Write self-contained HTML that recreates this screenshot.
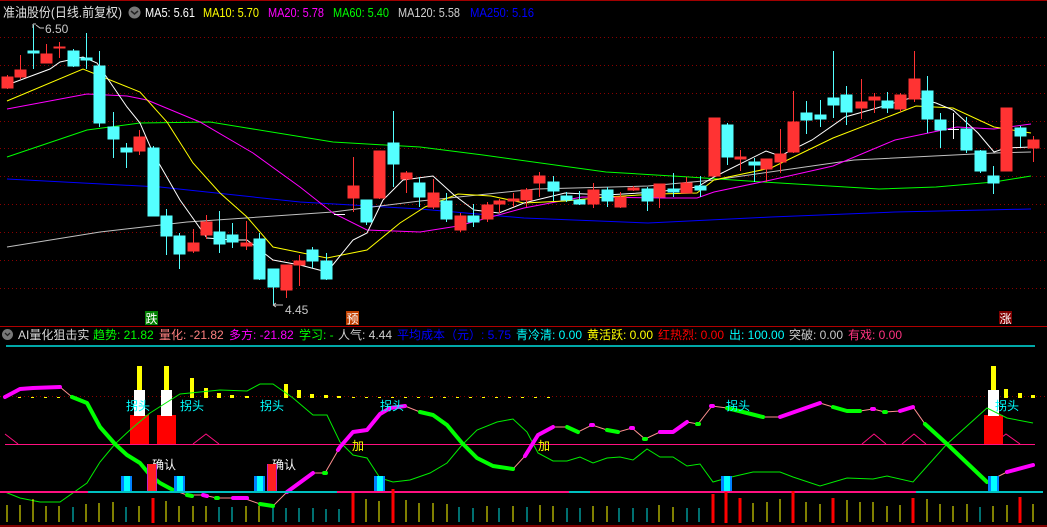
<!DOCTYPE html>
<html><head><meta charset="utf-8"><style>
html,body{margin:0;padding:0;background:#000;width:1047px;height:527px;overflow:hidden}
svg{display:block}
text{font-family:"Liberation Sans","Noto Sans CJK SC",sans-serif}
</style></head><body>
<svg width="1047" height="527" viewBox="0 0 1047 527" xmlns="http://www.w3.org/2000/svg">
<rect width="1047" height="527" fill="#000"/>
<line x1="0" y1="0.5" x2="1047" y2="0.5" stroke="#a00000"/>
<g stroke="#8a0000" stroke-dasharray="1,3">
<line x1="0" y1="37.5" x2="1047" y2="37.5"/><line x1="0" y1="65.5" x2="1047" y2="65.5"/><line x1="0" y1="93.5" x2="1047" y2="93.5"/><line x1="0" y1="121.5" x2="1047" y2="121.5"/><line x1="0" y1="148.5" x2="1047" y2="148.5"/><line x1="0" y1="176.5" x2="1047" y2="176.5"/><line x1="0" y1="204.5" x2="1047" y2="204.5"/><line x1="0" y1="232.5" x2="1047" y2="232.5"/><line x1="0" y1="260.5" x2="1047" y2="260.5"/><line x1="0" y1="288.5" x2="1047" y2="288.5"/>
<line x1="0" y1="396.5" x2="1047" y2="396.5"/>
</g>
<g font-size="13">
<text x="3" y="17" fill="#e0e0e0" textLength="119" lengthAdjust="spacingAndGlyphs">准油股份(日线.前复权)</text>
<circle cx="134.5" cy="12.5" r="6" fill="#777"/><path d="M131 11l3.5 3 3.5-3" stroke="#222" stroke-width="1.5" fill="none"/>
<text x="145" y="17" fill="#fff" textLength="50" lengthAdjust="spacingAndGlyphs">MA5: 5.61</text>
<text x="203" y="17" fill="#ffff00" textLength="56" lengthAdjust="spacingAndGlyphs">MA10: 5.70</text>
<text x="268" y="17" fill="#ff00ff" textLength="56" lengthAdjust="spacingAndGlyphs">MA20: 5.78</text>
<text x="333" y="17" fill="#00ff00" textLength="56" lengthAdjust="spacingAndGlyphs">MA60: 5.40</text>
<text x="398" y="17" fill="#d0d0d0" textLength="62" lengthAdjust="spacingAndGlyphs">MA120: 5.58</text>
<text x="470" y="17" fill="#0000ff" textLength="64" lengthAdjust="spacingAndGlyphs">MA250: 5.16</text>
</g>
<g fill="none" stroke-width="1">
<polyline stroke="#0000ff" points="7,179 160,187 300,202 420,209 524,218 648,223 771,217 895,212 1031,209"/>
<polyline stroke="#c0c0c0" points="7,247 100,232 187,222 333,212 420,201 536,189 648,186 714,180 854,160 994,153 1031,152"/>
<polyline stroke="#00ff00" points="7,157 87,130 140,123 210,122 333,142 420,147 483,155 606,172 689,177 763,182 879,189 936,187 994,182 1031,176"/>
<polyline stroke="#ff00ff" points="7,109 87,94 127,96 147,100 200,122 253,153 300,187 333,213 367,230 420,232 458,226 524,208 582,197 664,198 697,198 714,192 771,180 833,166 895,140 957,127 994,129 1031,124"/>
<polyline stroke="#ffff00" points="7,101 83,69 140,92 167,122 193,163 220,193 247,217 273,247 327,258 367,250 400,223 425,207 458,194 491,196 524,203 565,201 606,197 656,194 697,193 714,180 771,168 833,138 916,106 953,108 994,127 1031,133"/>
<polyline stroke="#ffffff" points="7,85 50,69 60,62 83,57 97,63 127,107 140,123 153,153 180,200 207,238 233,240 247,240 273,260 300,265 327,272 353,240 367,233 383,200 403,180 433,176 454,195 474,210 499,213 524,203 565,193 606,195 656,192 697,187 714,177 766,151 780,156 812,140 845,117 870,110 914,97 936,103 953,110 978,133 994,152 1006,148 1031,147"/>
</g>
<g shape-rendering="crispEdges">
<g stroke="#ff3333" fill="#ff3333">
<line x1="7.5" y1="75" x2="7.5" y2="89"/><rect x="2" y="77" width="11" height="11"/>
<line x1="20.5" y1="55" x2="20.5" y2="79"/><rect x="15" y="70" width="11" height="7"/>
<line x1="46.5" y1="44" x2="46.5" y2="63"/><rect x="41" y="54" width="11" height="9"/>
<line x1="59.5" y1="42" x2="59.5" y2="58"/><rect x="54" y="47" width="11" height="1"/>
<line x1="139.5" y1="130" x2="139.5" y2="155"/><rect x="134" y="137" width="11" height="14"/>
<line x1="193.5" y1="229" x2="193.5" y2="253"/><rect x="188" y="243" width="11" height="8"/>
<line x1="206.5" y1="215" x2="206.5" y2="239"/><rect x="201" y="222" width="11" height="13"/>
<line x1="246.5" y1="221" x2="246.5" y2="250"/><rect x="241" y="243" width="11" height="3"/>
<line x1="286.5" y1="265" x2="286.5" y2="298"/><rect x="281" y="265" width="11" height="25"/>
<line x1="299.5" y1="255" x2="299.5" y2="286"/><rect x="294" y="261" width="11" height="4"/>
<line x1="353.5" y1="157" x2="353.5" y2="212"/><rect x="348" y="186" width="11" height="12"/>
<line x1="379.5" y1="151" x2="379.5" y2="199"/><rect x="374" y="151" width="11" height="47"/>
<line x1="406.5" y1="171" x2="406.5" y2="193"/><rect x="401" y="173" width="11" height="6"/>
<line x1="433.5" y1="179" x2="433.5" y2="209"/><rect x="428" y="193" width="11" height="14"/>
<line x1="460.5" y1="213" x2="460.5" y2="232"/><rect x="455" y="216" width="11" height="14"/>
<line x1="487.5" y1="202" x2="487.5" y2="222"/><rect x="482" y="205" width="11" height="14"/>
<line x1="499.5" y1="199" x2="499.5" y2="213"/><rect x="494" y="201" width="11" height="3"/>
<line x1="513.5" y1="193" x2="513.5" y2="207"/><rect x="508" y="199" width="11" height="2"/>
<line x1="526.5" y1="188" x2="526.5" y2="207"/><rect x="521" y="190" width="11" height="10"/>
<line x1="539.5" y1="172" x2="539.5" y2="197"/><rect x="534" y="176" width="11" height="7"/>
<line x1="593.5" y1="183" x2="593.5" y2="208"/><rect x="588" y="190" width="11" height="14"/>
<line x1="620.5" y1="192" x2="620.5" y2="208"/><rect x="615" y="197" width="11" height="10"/>
<line x1="633.5" y1="186" x2="633.5" y2="191"/><rect x="628" y="188" width="11" height="2"/>
<line x1="659.5" y1="184" x2="659.5" y2="208"/><rect x="654" y="184" width="11" height="13"/>
<line x1="686.5" y1="177" x2="686.5" y2="193"/><rect x="681" y="183" width="11" height="10"/>
<rect x="709" y="118" width="11" height="58"/>
<line x1="740.5" y1="150" x2="740.5" y2="171"/><rect x="735" y="157" width="11" height="2"/>
<line x1="766.5" y1="159" x2="766.5" y2="182"/><rect x="761" y="159" width="11" height="10"/>
<line x1="780.5" y1="129" x2="780.5" y2="173"/><rect x="775" y="154" width="11" height="8"/>
<line x1="793.5" y1="91" x2="793.5" y2="153"/><rect x="788" y="122" width="11" height="30"/>
<line x1="861.5" y1="79" x2="861.5" y2="119"/><rect x="856" y="102" width="11" height="6"/>
<line x1="874.5" y1="93" x2="874.5" y2="113"/><rect x="869" y="97" width="11" height="3"/>
<line x1="900.5" y1="93" x2="900.5" y2="112"/><rect x="895" y="95" width="11" height="14"/>
<line x1="914.5" y1="51" x2="914.5" y2="102"/><rect x="909" y="79" width="11" height="20"/>
<rect x="1001" y="108" width="11" height="63"/>
<line x1="1033.5" y1="136" x2="1033.5" y2="162"/><rect x="1028" y="140" width="11" height="8"/>
</g>
<g stroke="#54ffff" fill="#54ffff">
<line x1="33.5" y1="25" x2="33.5" y2="69"/><rect x="28" y="51" width="11" height="2"/>
<line x1="73.5" y1="49" x2="73.5" y2="67"/><rect x="68" y="51" width="11" height="15"/>
<line x1="86.5" y1="33" x2="86.5" y2="69"/><rect x="81" y="58" width="11" height="2"/>
<line x1="99.5" y1="51" x2="99.5" y2="127"/><rect x="94" y="66" width="11" height="57"/>
<line x1="113.5" y1="112" x2="113.5" y2="158"/><rect x="108" y="127" width="11" height="12"/>
<line x1="126.5" y1="143" x2="126.5" y2="168"/><rect x="121" y="148" width="11" height="4"/>
<line x1="153.5" y1="146" x2="153.5" y2="216"/><rect x="148" y="148" width="11" height="68"/>
<line x1="166.5" y1="209" x2="166.5" y2="255"/><rect x="161" y="216" width="11" height="20"/>
<line x1="179.5" y1="233" x2="179.5" y2="269"/><rect x="174" y="236" width="11" height="18"/>
<line x1="219.5" y1="211" x2="219.5" y2="253"/><rect x="214" y="232" width="11" height="12"/>
<line x1="232.5" y1="223" x2="232.5" y2="248"/><rect x="227" y="235" width="11" height="7"/>
<line x1="259.5" y1="233" x2="259.5" y2="280"/><rect x="254" y="239" width="11" height="40"/>
<line x1="273.5" y1="269" x2="273.5" y2="305"/><rect x="268" y="269" width="11" height="18"/>
<line x1="312.5" y1="247" x2="312.5" y2="268"/><rect x="307" y="250" width="11" height="11"/>
<line x1="326.5" y1="253" x2="326.5" y2="280"/><rect x="321" y="261" width="11" height="18"/>
<line x1="366.5" y1="200" x2="366.5" y2="225"/><rect x="361" y="200" width="11" height="22"/>
<line x1="393.5" y1="111" x2="393.5" y2="187"/><rect x="388" y="143" width="11" height="21"/>
<line x1="419.5" y1="177" x2="419.5" y2="207"/><rect x="414" y="183" width="11" height="14"/>
<line x1="446.5" y1="193" x2="446.5" y2="222"/><rect x="441" y="201" width="11" height="18"/>
<line x1="473.5" y1="204" x2="473.5" y2="227"/><rect x="468" y="216" width="11" height="6"/>
<line x1="553.5" y1="176" x2="553.5" y2="201"/><rect x="548" y="182" width="11" height="9"/>
<line x1="566.5" y1="192" x2="566.5" y2="202"/><rect x="561" y="196" width="11" height="4"/>
<line x1="579.5" y1="191" x2="579.5" y2="205"/><rect x="574" y="200" width="11" height="4"/>
<line x1="607.5" y1="187" x2="607.5" y2="207"/><rect x="602" y="190" width="11" height="11"/>
<line x1="647.5" y1="187" x2="647.5" y2="211"/><rect x="642" y="189" width="11" height="12"/>
<line x1="673.5" y1="173" x2="673.5" y2="197"/><rect x="668" y="189" width="11" height="3"/>
<line x1="700.5" y1="176" x2="700.5" y2="197"/><rect x="695" y="186" width="11" height="4"/>
<line x1="727.5" y1="123" x2="727.5" y2="165"/><rect x="722" y="125" width="11" height="32"/>
<line x1="754.5" y1="158" x2="754.5" y2="182"/><rect x="749" y="162" width="11" height="3"/>
<line x1="806.5" y1="101" x2="806.5" y2="134"/><rect x="801" y="113" width="11" height="7"/>
<line x1="820.5" y1="100" x2="820.5" y2="127"/><rect x="815" y="115" width="11" height="4"/>
<line x1="833.5" y1="51" x2="833.5" y2="118"/><rect x="828" y="98" width="11" height="7"/>
<line x1="846.5" y1="86" x2="846.5" y2="125"/><rect x="841" y="95" width="11" height="17"/>
<line x1="887.5" y1="92" x2="887.5" y2="113"/><rect x="882" y="101" width="11" height="7"/>
<line x1="927.5" y1="76" x2="927.5" y2="133"/><rect x="922" y="91" width="11" height="28"/>
<line x1="940.5" y1="113" x2="940.5" y2="148"/><rect x="935" y="120" width="11" height="10"/>
<line x1="966.5" y1="117" x2="966.5" y2="153"/><rect x="961" y="129" width="11" height="21"/>
<line x1="980.5" y1="150" x2="980.5" y2="173"/><rect x="975" y="151" width="11" height="20"/>
<line x1="993.5" y1="166" x2="993.5" y2="194"/><rect x="988" y="176" width="11" height="7"/>
<line x1="1020.5" y1="126" x2="1020.5" y2="147"/><rect x="1015" y="128" width="11" height="8"/>
</g>
<g stroke="#fff"><line x1="953.5" y1="113" x2="953.5" y2="139"/><line x1="948" y1="129.5" x2="959" y2="129.5"/><line x1="334" y1="214.5" x2="345" y2="214.5"/></g>
</g>
<g fill="#c8c8c8" font-size="12">
<path d="M33 24h3M33 24v4M36 25l4 3h4" stroke="#c8c8c8" fill="none"/>
<text x="45" y="33">6.50</text>
<path d="M273 305h10M273 305l3-2M273 305l3 2" stroke="#c8c8c8" fill="none"/>
<text x="285" y="314">4.45</text>
</g>
<rect x="145" y="311" width="13" height="14" fill="#008000"/><text x="145.5" y="323" font-size="12" fill="#fff">跌</text>
<rect x="346" y="311" width="13" height="14" fill="#c04000"/><text x="346.5" y="323" font-size="12" fill="#fff">预</text>
<rect x="999" y="311" width="13" height="13" fill="#800000"/><text x="999.5" y="323" font-size="12" fill="#fff">涨</text>
<line x1="0" y1="326.5" x2="1047" y2="326.5" stroke="#b00000"/>
<circle cx="7.5" cy="334.5" r="5.5" fill="#777"/><path d="M5 333l2.5 2.5 2.5-2.5" stroke="#222" stroke-width="1.3" fill="none"/>
<g font-size="12">
<text x="18" y="339" fill="#d8d8d8">AI量化狙击实</text>
<text x="93" y="339" fill="#00ff00">趋势: 21.82</text>
<text x="159" y="339" fill="#ff8080">量化: -21.82</text>
<text x="229" y="339" fill="#ff00ff">多方: -21.82</text>
<text x="299" y="339" fill="#00ff00">学习: -</text>
<text x="338" y="339" fill="#d0d0d0">人气: 4.44</text>
<text x="397" y="339" fill="#0000ff">平均成本（元）: 5.75</text>
<text x="516" y="339" fill="#00ffff">青冷清: 0.00</text>
<text x="587" y="339" fill="#ffff00">黄活跃: 0.00</text>
<text x="658" y="339" fill="#ff0000">红热烈: 0.00</text>
<text x="729" y="339" fill="#00ffff">出: 100.00</text>
<text x="789" y="339" fill="#c8c8c8">突破: 0.00</text>
<text x="848" y="339" fill="#ff3380">有戏: 0.00</text>
</g>
<line x1="6" y1="346" x2="1035" y2="346" stroke="#00e0e0" stroke-width="1.5"/>
<line x1="5" y1="444.5" x2="1035" y2="444.5" stroke="#ff1080"/>
<g stroke="#ffff00" stroke-width="4" shape-rendering="crispEdges">
<line x1="192" y1="378" x2="192" y2="398"/><line x1="206" y1="388" x2="206" y2="398"/><line x1="219" y1="393" x2="219" y2="398"/><line x1="232" y1="395" x2="232" y2="398"/><line x1="247" y1="396" x2="247" y2="398"/>
<line x1="286" y1="384" x2="286" y2="398"/><line x1="299" y1="390" x2="299" y2="398"/><line x1="312" y1="394" x2="312" y2="398"/><line x1="326" y1="395" x2="326" y2="398"/><line x1="339" y1="396" x2="339" y2="398"/>
<line x1="1006" y1="389" x2="1006" y2="398"/><line x1="1020" y1="393" x2="1020" y2="398"/><line x1="1033" y1="395" x2="1033" y2="398"/>
</g>
<g stroke="#ffff00" stroke-dasharray="3,10" stroke-width="1"><line x1="18" y1="397.5" x2="72" y2="397.5"/><line x1="352" y1="397.5" x2="560" y2="397.5"/></g>
<g stroke="#ff1080" fill="none"><polyline points="5,434 18,444"/><polyline points="193,444 206,434 219,444"/><polyline points="862,444 874,434 886,444"/><polyline points="902,444 914,434 926,444"/><polyline points="993,444 1006,434 1020,444"/></g>
<g shape-rendering="crispEdges">
<rect x="130" y="415" width="19" height="29" fill="#ff0000"/><rect x="134" y="390" width="11" height="26" fill="#fff"/><rect x="137" y="366" width="5" height="24" fill="#ffff00"/>
<rect x="157" y="415" width="19" height="29" fill="#ff0000"/><rect x="161" y="390" width="11" height="26" fill="#fff"/><rect x="164" y="366" width="5" height="24" fill="#ffff00"/>
<rect x="984" y="415" width="19" height="29" fill="#ff0000"/><rect x="988" y="390" width="11" height="26" fill="#fff"/><rect x="991" y="366" width="5" height="24" fill="#ffff00"/>
</g>
<polyline fill="none" stroke="#00ee00" stroke-width="1" points="5,492 20,498 40,502 60,502 87,483 100,462 115,444 130,430 150,413 180,394 220,390 247,391 260,384 273,384 293,398 313,415 327,415 340,442 353,455 367,458 380,478 393,482 410,480 430,473 447,463 462,445 477,430 497,422 513,419 527,432 538,453 553,461 567,461 580,457 593,463 607,458 620,457 633,460 647,449 660,457 673,457 687,466 700,464 713,482 727,478 753,472 780,472 793,477 820,486 847,478 873,479 887,476 913,482 947,444 987,408 1007,418 1033,423"/>
<polyline fill="none" stroke="#ff9090" stroke-width="1" points="5,397 20,389 33,388 60,387 72,397 87,403 100,427 115,444 127,455 140,463 150,475 160,483 173,490 187,495 203,495 217,498 243,498 260,504 273,506 287,492 313,473 325,473 340,447 353,432 367,430 380,414 390,408 405,406 420,412 433,415 447,425 462,443 477,458 493,466 513,469 525,456 538,435 553,427 567,427 578,432 592,425 607,430 618,432 632,428 645,439 660,432 673,432 687,422 698,424 712,406 727,408 747,413 763,417 780,417 820,403 833,407 847,411 860,411 873,409 885,412 900,411 913,407 925,424 947,444 967,463 987,482 1007,472 1033,465"/>
<g fill="none" stroke-width="4" stroke-linecap="round" stroke-linejoin="round">
<g stroke="#ff00ff">
<polyline points="5,397 20,389 33,388 60,387"/><polyline points="203,495 207,496"/><polyline points="233,498 247,498"/><polyline points="287,492 313,473"/><polyline points="338,450 340,447 353,432 367,430 380,414 390,408 405,406"/><polyline points="525,456 538,435 553,427"/><polyline points="591,425 593,425"/><polyline points="631,428 633,428"/><polyline points="660,432 673,432 687,422"/><polyline points="711,406 713,406"/><polyline points="780,417 820,403"/><polyline points="872,409 874,409"/><polyline points="900,411 913,407"/><polyline points="1007,472 1033,465"/>
</g>
<g stroke="#00ff00">
<polyline points="72,397 87,403 100,427 115,444 127,455 140,463 150,475 160,483 173,490"/><polyline points="187,495 192,496"/><polyline points="216,498 218,498"/><polyline points="260,504 273,506"/><polyline points="324,473 326,473"/><polyline points="420,412 433,415 447,425 462,443 477,458 493,466 513,469"/><polyline points="567,427 578,432"/><polyline points="607,430 618,432"/><polyline points="644,439 646,439"/><polyline points="697,424 699,424"/><polyline points="727,408 747,413 763,417"/><polyline points="833,407 847,411 860,411"/><polyline points="884,412 886,412"/><polyline points="925,424 947,444 967,463 987,482"/>
</g>
</g>
<g font-size="12">
<text x="126" y="410" fill="#00ffff">拐头</text><text x="180" y="410" fill="#00ffff">拐头</text><text x="260" y="410" fill="#00ffff">拐头</text><text x="380" y="410" fill="#00ffff">拐头</text><text x="726" y="410" fill="#00ffff">拐头</text><text x="995" y="410" fill="#00ffff">拐头</text>
<text x="352" y="450" fill="#ffff00">加</text><text x="538" y="450" fill="#ffff00">加</text>
<text x="152" y="469" fill="#fff">确认</text><text x="272" y="469" fill="#fff">确认</text>
</g>
<g shape-rendering="crispEdges">
<rect x="121" y="476" width="11" height="16" fill="#0080ff"/><rect x="124" y="476" width="6" height="16" fill="#00ffff"/>
<rect x="174" y="476" width="11" height="16" fill="#0080ff"/><rect x="177" y="476" width="6" height="16" fill="#00ffff"/>
<rect x="254" y="476" width="11" height="16" fill="#0080ff"/><rect x="257" y="476" width="6" height="16" fill="#00ffff"/>
<rect x="374" y="476" width="11" height="16" fill="#0080ff"/><rect x="377" y="476" width="6" height="16" fill="#00ffff"/>
<rect x="721" y="476" width="11" height="16" fill="#0080ff"/><rect x="724" y="476" width="6" height="16" fill="#00ffff"/>
<rect x="988" y="476" width="11" height="16" fill="#0080ff"/><rect x="991" y="476" width="6" height="16" fill="#00ffff"/>
<rect x="147" y="464" width="10" height="28" fill="#c020c0"/><rect x="148" y="464" width="8" height="28" fill="#ff2020"/>
<rect x="267" y="464" width="10" height="28" fill="#c020c0"/><rect x="268" y="464" width="8" height="28" fill="#ff2020"/>
</g>
<g stroke-width="2"><line x1="0" y1="492" x2="88" y2="492" stroke="#ff1080"/><line x1="88" y1="492" x2="337" y2="492" stroke="#00c0c0"/><line x1="337" y1="492" x2="569" y2="492" stroke="#ff1080"/><line x1="569" y1="492" x2="590" y2="492" stroke="#00c0c0"/><line x1="590" y1="492" x2="916" y2="492" stroke="#ff1080"/><line x1="916" y1="492" x2="1043" y2="492" stroke="#00c0c0"/></g>
<g stroke-width="1" shape-rendering="crispEdges">
<g stroke="#ffff00"><line x1="7" y1="505" x2="7" y2="522"/><line x1="20" y1="505" x2="20" y2="522"/><line x1="33" y1="499" x2="33" y2="522"/><line x1="46" y1="506" x2="46" y2="522"/><line x1="59" y1="506" x2="59" y2="522"/><line x1="86" y1="504" x2="86" y2="522"/><line x1="99" y1="503" x2="99" y2="522"/><line x1="113" y1="502" x2="113" y2="522"/><line x1="139" y1="506" x2="139" y2="522"/><line x1="166" y1="501" x2="166" y2="522"/><line x1="179" y1="506" x2="179" y2="522"/><line x1="193" y1="506" x2="193" y2="522"/><line x1="206" y1="506" x2="206" y2="522"/><line x1="246" y1="506" x2="246" y2="522"/><line x1="259" y1="506" x2="259" y2="522"/><line x1="366" y1="499" x2="366" y2="522"/><line x1="379" y1="501" x2="379" y2="522"/><line x1="406" y1="500" x2="406" y2="522"/><line x1="419" y1="503" x2="419" y2="522"/><line x1="433" y1="503" x2="433" y2="522"/><line x1="447" y1="504" x2="447" y2="522"/><line x1="487" y1="506" x2="487" y2="522"/><line x1="513" y1="506" x2="513" y2="522"/><line x1="540" y1="505" x2="540" y2="522"/><line x1="553" y1="506" x2="553" y2="522"/><line x1="593" y1="506" x2="593" y2="522"/><line x1="607" y1="506" x2="607" y2="522"/><line x1="659" y1="505" x2="659" y2="522"/><line x1="673" y1="507" x2="673" y2="522"/><line x1="753" y1="503" x2="753" y2="522"/><line x1="767" y1="502" x2="767" y2="522"/><line x1="780" y1="499" x2="780" y2="522"/><line x1="806" y1="502" x2="806" y2="522"/><line x1="820" y1="504" x2="820" y2="522"/><line x1="847" y1="500" x2="847" y2="522"/><line x1="860" y1="502" x2="860" y2="522"/><line x1="873" y1="502" x2="873" y2="522"/><line x1="887" y1="506" x2="887" y2="522"/><line x1="900" y1="505" x2="900" y2="522"/><line x1="927" y1="499" x2="927" y2="522"/><line x1="940" y1="504" x2="940" y2="522"/><line x1="953" y1="506" x2="953" y2="522"/><line x1="967" y1="504" x2="967" y2="522"/><line x1="993" y1="506" x2="993" y2="522"/><line x1="1007" y1="505" x2="1007" y2="522"/><line x1="1033" y1="504" x2="1033" y2="522"/></g>
<g stroke="#00e0e0"><line x1="73" y1="507" x2="73" y2="522"/><line x1="126" y1="507" x2="126" y2="522"/><line x1="219" y1="507" x2="219" y2="522"/><line x1="232" y1="507" x2="232" y2="522"/><line x1="273" y1="508" x2="273" y2="522"/><line x1="286" y1="508" x2="286" y2="522"/><line x1="299" y1="508" x2="299" y2="522"/><line x1="313" y1="508" x2="313" y2="522"/><line x1="326" y1="509" x2="326" y2="522"/><line x1="339" y1="509" x2="339" y2="522"/><line x1="459" y1="507" x2="459" y2="522"/><line x1="473" y1="508" x2="473" y2="522"/><line x1="499" y1="508" x2="499" y2="522"/><line x1="527" y1="507" x2="527" y2="522"/><line x1="567" y1="508" x2="567" y2="522"/><line x1="580" y1="508" x2="580" y2="522"/><line x1="619" y1="508" x2="619" y2="522"/><line x1="633" y1="508" x2="633" y2="522"/><line x1="647" y1="508" x2="647" y2="522"/><line x1="687" y1="508" x2="687" y2="522"/><line x1="699" y1="508" x2="699" y2="522"/><line x1="980" y1="507" x2="980" y2="522"/></g>
<g stroke="#ff0000" stroke-width="3"><line x1="153" y1="498" x2="153" y2="523"/><line x1="353" y1="493" x2="353" y2="523"/><line x1="393" y1="489" x2="393" y2="523"/><line x1="713" y1="494" x2="713" y2="523"/><line x1="726" y1="492" x2="726" y2="523"/><line x1="740" y1="498" x2="740" y2="523"/><line x1="793" y1="491" x2="793" y2="523"/><line x1="833" y1="498" x2="833" y2="523"/><line x1="913" y1="498" x2="913" y2="523"/><line x1="1020" y1="497" x2="1020" y2="523"/></g>
</g>
<line x1="0" y1="526" x2="1047" y2="526" stroke="#b00000" stroke-width="1.5"/>
</svg>
</body></html>
